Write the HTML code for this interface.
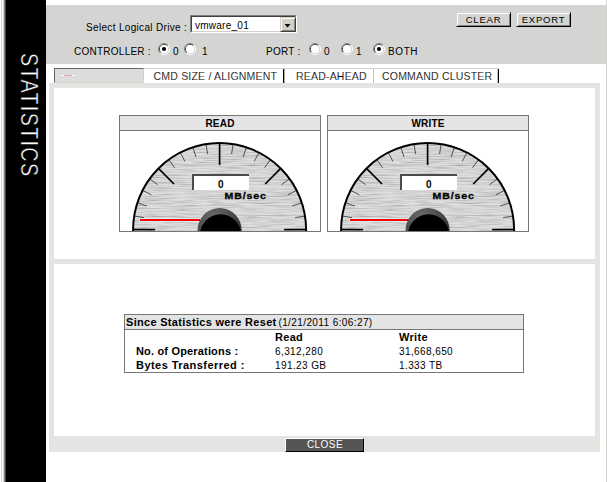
<!DOCTYPE html>
<html><head><meta charset="utf-8">
<style>
*{margin:0;padding:0;box-sizing:border-box}
html,body{width:607px;height:482px;overflow:hidden;background:#fff;font-family:"Liberation Sans",sans-serif;color:#000}
.a{position:absolute}
.t{position:absolute;white-space:nowrap;line-height:1}
.lbl{font-size:10px;letter-spacing:0.33px}
.r10{font-size:10px;letter-spacing:0.25px}
.radio{position:absolute;width:12px;height:12px}
.btn{position:absolute;background:#d4d5d2;border-top:1px solid #d4d5d2;border-left:1px solid #d4d5d2;border-right:1px solid #000;border-bottom:1px solid #000;box-shadow:inset 1px 1px 0 #fff,inset -1px -1px 0 #808080}
.btn span{position:absolute;left:0;right:0;text-align:center;font-size:9.5px;letter-spacing:0.8px;line-height:1;color:#000}
.gbox{position:absolute;top:115px;width:202px;height:117px;border:1px solid #777;background:#fff}
.ghead{position:absolute;left:0;top:0;width:200px;height:15px;background:#e4e4e4;border-bottom:1px solid #777;font-weight:bold;font-size:10px;letter-spacing:0.2px;text-align:center;line-height:15px}
.gsvg{position:absolute;left:0;top:15px}
.tab{position:absolute;top:71px;font-size:10.5px;line-height:1;white-space:nowrap;letter-spacing:0.2px;-webkit-text-stroke:0.12px #fff}
.st{position:absolute;white-space:nowrap;line-height:1;font-size:11px}
.num{font-size:10px;letter-spacing:0.4px}
</style></head><body>
<!-- left window edge -->
<div class="a" style="left:1px;top:0;width:1px;height:482px;background:#d4d0c8"></div>
<div class="a" style="left:3px;top:0;width:1px;height:482px;background:#d4d0c8"></div>
<div class="a" style="left:4px;top:0;width:1px;height:482px;background:#808080"></div>
<div class="a" style="left:5px;top:0;width:1px;height:482px;background:#404040"></div>
<div class="a" style="left:6px;top:0;width:40px;height:482px;background:#000"></div>
<div class="a" style="left:606px;top:0;width:1px;height:482px;background:#d4d0c8"></div>
<!-- vertical title -->
<div class="t" style="left:40px;top:52.6px;transform-origin:0 0;transform:rotate(90deg) scaleX(0.855);color:#fff;-webkit-text-stroke:0.45px #000;font-size:23px;letter-spacing:1.6px">STATISTICS</div>

<!-- top gray panel -->
<div class="a" style="left:46px;top:5px;width:560px;height:59px;background:#d4d5d2"></div>
<div class="t lbl" style="left:86px;top:22.6px">Select Logical Drive :</div>
<!-- select -->
<div class="a" style="left:190px;top:15px;width:107px;height:18px;background:#fff;border-top:1px solid #808080;border-left:1px solid #808080;border-right:1px solid #fff;border-bottom:1px solid #fff"></div>
<div class="a" style="left:191px;top:16px;width:105px;height:16px;border-top:1px solid #404040;border-left:1px solid #404040;border-right:1px solid #d4d0c8;border-bottom:1px solid #d4d0c8"></div>
<div class="t r10" style="left:195px;top:20.6px">vmware_01</div>
<div class="a" style="left:280px;top:17px;width:16px;height:15px;background:#d4d0c8;border-top:1px solid #d4d0c8;border-left:1px solid #d4d0c8;border-right:1px solid #404040;border-bottom:1px solid #404040;box-shadow:inset 1px 1px 0 #fff,inset -1px -1px 0 #808080"></div>
<svg class="a" style="left:284px;top:24px" width="7" height="4"><path d="M0.5 0H6.5L3.5 3.5Z" fill="#000"/></svg>

<!-- buttons -->
<div class="btn" style="left:456px;top:12px;width:55px;height:15px"><span style="top:1.8px;left:0px">CLEAR</span></div>
<div class="btn" style="left:516px;top:12px;width:55px;height:15px"><span style="top:1.8px">EXPORT</span></div>

<svg width="0" height="0" style="position:absolute">
<defs>
<linearGradient id="rg1" x1="0" y1="0" x2="1" y2="1"><stop offset="0.5" stop-color="#808080"/><stop offset="0.5" stop-color="#fff"/></linearGradient>
<linearGradient id="rg2" x1="0" y1="0" x2="1" y2="1"><stop offset="0.5" stop-color="#404040"/><stop offset="0.5" stop-color="#d4d0c8"/></linearGradient>
<g id="run"><circle cx="6" cy="6" r="5.5" fill="none" stroke="url(#rg1)"/><circle cx="6" cy="6" r="4.5" fill="#fff" stroke="url(#rg2)"/><circle cx="6" cy="6" r="4" fill="#fff"/></g>
<g id="rch"><use href="#run"/><circle cx="6" cy="6" r="2.1" fill="#000"/></g>
</defs></svg>
<!-- controller row -->
<div class="t r10" style="left:74px;top:47.4px">CONTROLLER :</div>
<svg class="radio" style="left:158px;top:43px" width="12" height="12"><use href="#rch"/></svg>
<div class="t r10" style="left:173px;top:47.4px;font-size:10px">0</div>
<svg class="radio" style="left:184px;top:43px" width="12" height="12"><use href="#run"/></svg>
<div class="t r10" style="left:202px;top:47.4px;font-size:10px">1</div>

<div class="t r10" style="left:266px;top:47.4px">PORT :</div>
<svg class="radio" style="left:309px;top:43px" width="12" height="12"><use href="#run"/></svg>
<div class="t r10" style="left:324px;top:47.4px;font-size:10px">0</div>
<svg class="radio" style="left:341px;top:43px" width="12" height="12"><use href="#run"/></svg>
<div class="t r10" style="left:356px;top:47.4px;font-size:10px">1</div>
<svg class="radio" style="left:373px;top:43px" width="12" height="12"><use href="#rch"/></svg>
<div class="t r10" style="left:388px;top:47.4px;font-size:10px;letter-spacing:0.6px">BOTH</div>

<!-- tabs -->
<div class="a" style="left:54px;top:68px;width:90px;height:15px;background:#dcdcdc;border-top:1px solid #666;border-left:1px solid #666;border-right:1px solid #d4d0c8;border-bottom:1px solid #d4d0c8"></div>
<div class="a" style="left:61px;top:75px;width:14px;height:1px;background:#fff"></div>
<div class="a" style="left:64px;top:75px;width:8px;height:1px;background:#eaa"></div>
<div class="a" style="left:144px;top:68px;width:355px;height:1px;background:#d0d0d0"></div>
<div class="tab" style="left:153.5px">CMD SIZE / ALIGNMENT</div>
<div class="a" style="left:283px;top:69px;width:1px;height:14px;background:#000"></div><div class="a" style="left:284px;top:69px;width:1px;height:14px;background:#aaa"></div>
<div class="tab" style="left:296px">READ-AHEAD</div>
<div class="a" style="left:373px;top:69px;width:1px;height:14px;background:#c4c4c4"></div>
<div class="tab" style="left:382px">COMMAND CLUSTER</div>
<div class="a" style="left:498px;top:69px;width:1px;height:14px;background:#000"></div><div class="a" style="left:497px;top:69px;width:1px;height:14px;background:#bbb"></div>

<!-- frame -->
<div class="a" style="left:49px;top:83px;width:551px;height:369px;background:#e4e4e2"></div>
<div class="a" style="left:54px;top:88px;width:541px;height:171px;background:#fff"></div>
<div class="a" style="left:54px;top:264px;width:541px;height:172px;background:#fff"></div>

<!-- gauges -->
<div class="gbox" style="left:119px"><div class="ghead">READ</div>
<svg class="gsvg" width="200" height="100" viewBox="0 0 200 100"><use href="#gauge"/><rect x="19" y="87" width="62" height="4" fill="#d8eeee"/><rect x="20" y="88" width="60" height="2" fill="#f00"/><use href="#hub"/></svg></div>
<div class="gbox" style="left:327px"><div class="ghead">WRITE</div>
<svg class="gsvg" width="200" height="100" viewBox="0 0 200 100"><use href="#gauge"/><rect x="21" y="87" width="62" height="4" fill="#d8eeee"/><rect x="22" y="88" width="60" height="2" fill="#f00"/><use href="#hub"/></svg></div>

<svg width="0" height="0" style="position:absolute">
<defs>
<filter id="brush" x="0" y="0" width="100%" height="100%">
<feTurbulence type="fractalNoise" baseFrequency="0.04 1.1" numOctaves="2" seed="5"/>
<feColorMatrix type="matrix" values="1.5 0 0 0 0.05  1.5 0 0 0 0.05  1.5 0 0 0 0.05  0 0 0 0 0.45"/>
<feComposite in2="SourceGraphic" operator="in"/>
</filter>
<radialGradient id="hubg" cx="0.35" cy="0.2" r="0.9"><stop offset="0" stop-color="#6a6a6a"/><stop offset="0.5" stop-color="#484848"/><stop offset="1" stop-color="#222"/></radialGradient>
<filter id="hb" x="-20%" y="-20%" width="140%" height="140%"><feGaussianBlur stdDeviation="0.5"/></filter>
<g id="gauge">
<path d="M13.10 100 V98.60 A86.50 86.50 0 0 1 186.10 98.60 V100 Z" fill="#c2c2c2"/>
<path d="M13.10 100 V98.60 A86.50 86.50 0 0 1 186.10 98.60 V100 Z" fill="#000" filter="url(#brush)"/>
<line x1="35.10" y1="98.60" x2="13.10" y2="98.60" stroke="#000" stroke-width="1.7"/><line x1="24.04" y1="86.63" x2="14.16" y2="85.07" stroke="#222" stroke-width="0.75"/><line x1="26.84" y1="74.96" x2="17.33" y2="71.87" stroke="#222" stroke-width="0.75"/><line x1="31.44" y1="63.87" x2="22.53" y2="59.33" stroke="#222" stroke-width="0.75"/><line x1="37.71" y1="53.63" x2="29.62" y2="47.76" stroke="#222" stroke-width="0.75"/><line x1="53.99" y1="52.99" x2="38.44" y2="37.44" stroke="#000" stroke-width="1.7"/><line x1="54.63" y1="36.71" x2="48.76" y2="28.62" stroke="#222" stroke-width="0.75"/><line x1="64.87" y1="30.44" x2="60.33" y2="21.53" stroke="#222" stroke-width="0.75"/><line x1="75.96" y1="25.84" x2="72.87" y2="16.33" stroke="#222" stroke-width="0.75"/><line x1="87.63" y1="23.04" x2="86.07" y2="13.16" stroke="#222" stroke-width="0.75"/><line x1="99.60" y1="34.10" x2="99.60" y2="12.10" stroke="#000" stroke-width="1.7"/><line x1="111.57" y1="23.04" x2="113.13" y2="13.16" stroke="#222" stroke-width="0.75"/><line x1="123.24" y1="25.84" x2="126.33" y2="16.33" stroke="#222" stroke-width="0.75"/><line x1="134.33" y1="30.44" x2="138.87" y2="21.53" stroke="#222" stroke-width="0.75"/><line x1="144.57" y1="36.71" x2="150.44" y2="28.62" stroke="#222" stroke-width="0.75"/><line x1="145.21" y1="52.99" x2="160.76" y2="37.44" stroke="#000" stroke-width="1.7"/><line x1="161.49" y1="53.63" x2="169.58" y2="47.76" stroke="#222" stroke-width="0.75"/><line x1="167.76" y1="63.87" x2="176.67" y2="59.33" stroke="#222" stroke-width="0.75"/><line x1="172.36" y1="74.96" x2="181.87" y2="71.87" stroke="#222" stroke-width="0.75"/><line x1="175.16" y1="86.63" x2="185.04" y2="85.07" stroke="#222" stroke-width="0.75"/><line x1="164.10" y1="98.60" x2="186.10" y2="98.60" stroke="#000" stroke-width="1.7"/>
<path d="M13.10 100 V98.60 A86.50 86.50 0 0 1 186.10 98.60 V100" fill="none" stroke="#000" stroke-width="2"/>
<rect x="72" y="43" width="57" height="16" fill="#fff"/>
<path d="M73 59V44H129" fill="none" stroke="#4a4a4a" stroke-width="2"/>
<text x="100.8" y="57" font-size="10" font-weight="bold" text-anchor="middle" font-family="Liberation Sans">0</text>
<text transform="translate(104.6 68.1) scale(1.13 1)" font-size="9.4" font-weight="bold" letter-spacing="0.75" stroke="#000" stroke-width="0.3" font-family="Liberation Sans">MB/sec</text>
</g>
<g id="hub"><circle cx="99.60" cy="99.10" r="22" fill="url(#hubg)"/>
<circle cx="100.6" cy="103.7" r="20.5" fill="#000" filter="url(#hb)"/>
</g>
</defs></svg>

<!-- stats table -->
<div class="a" style="left:124px;top:314px;width:400px;height:59px;border:1px solid #777"></div>
<div class="a" style="left:125px;top:315px;width:398px;height:15px;background:#e4e4e4;border-bottom:1px solid #777"></div>
<div class="st" style="left:126px;top:317px;font-weight:bold;letter-spacing:0.3px">Since Statistics were Reset <span style="font-weight:normal;font-size:10px;letter-spacing:0.4px;margin-left:-1.5px">(1/21/2011 6:06:27)</span></div>
<div class="st" style="left:275px;top:332px;font-weight:bold;letter-spacing:0.3px">Read</div>
<div class="st" style="left:399px;top:332px;font-weight:bold;letter-spacing:0.3px">Write</div>
<div class="st" style="left:136px;top:346px;font-weight:bold;letter-spacing:0.17px">No. of Operations :</div>
<div class="st num" style="left:275px;top:347px">6,312,280</div>
<div class="st num" style="left:399px;top:347px">31,668,650</div>
<div class="st" style="left:136px;top:360px;font-weight:bold;letter-spacing:0.45px">Bytes Transferred :</div>
<div class="st num" style="left:275px;top:361px">191.23 GB</div>
<div class="st num" style="left:399px;top:361px">1.333 TB</div>

<!-- close -->
<div class="a" style="left:285px;top:438px;width:79px;height:14px;background:#555;border-top:1px solid #fff;border-left:1px solid #fff;border-right:1px solid #000;border-bottom:1px solid #000"></div>
<div class="t" style="left:285px;top:440px;width:80px;text-align:center;color:#fff;font-size:10px;letter-spacing:0.45px">CLOSE</div>
</body></html>
